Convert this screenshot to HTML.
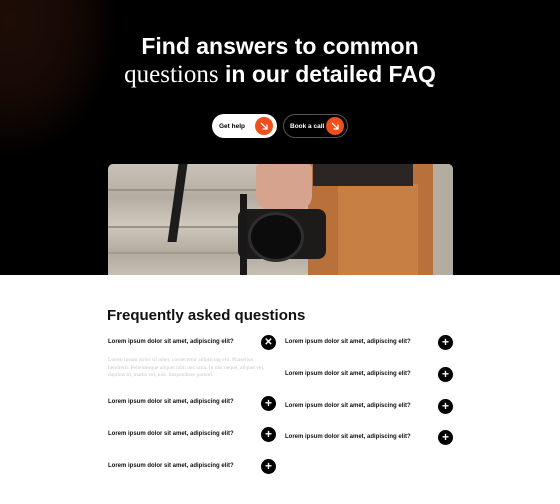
<!DOCTYPE html>
<html><head><style>
*{margin:0;padding:0;box-sizing:border-box}
body{width:560px;height:504px;background:#fff;font-family:"Liberation Sans",sans-serif;position:relative;overflow:hidden}
.hero{position:absolute;left:0;top:0;width:560px;height:275px;background:radial-gradient(ellipse 110px 140px at 10px 20px,#1e0d07 0%,#160904 55%,#000 100%),#000}
h1{position:absolute;top:32px;left:0;width:560px;text-align:center;color:#fff;font-size:23px;line-height:28px;font-weight:700}
h1 em{font-family:"Liberation Serif",serif;font-style:normal;font-weight:400;font-size:25px}
.btn{position:absolute;top:114px;height:24px;border-radius:12px;font-size:6.5px;font-weight:700;padding-left:7px}
.btn span.t{position:absolute;left:7px;top:9px;line-height:7px}
.btn .c{position:absolute;right:4px;top:3px;width:18px;height:18px;border-radius:50%;background:#f04e1a}
.photo{position:absolute;left:108px;top:164px;width:345px;height:111px;border-radius:5px 5px 0 0;overflow:hidden;background:linear-gradient(180deg,#c9c2b8 0%,#b5ada2 30%,#cfc8bd 55%,#b2aa9e 80%,#c6bfb4 100%)}
.photo div{position:absolute}
.faq{position:absolute;font-size:6px;font-weight:700;color:#111}
.ic{position:absolute;width:15px;height:15px;border-radius:50%;background:#000;color:#fff;font-size:12px;line-height:15px;text-align:center;font-weight:700}
</style></head><body>
<div class="hero">
<h1>Find answers to common<br><em>questions</em> in our detailed FAQ</h1>
<div class="btn" style="left:212px;width:65px;background:#fff;color:#000"><span class="t">Get help</span><span class="c"><svg width="18" height="18" viewBox="0 0 18 18"><path d="M6 6L12 12M12 7.5V12H7.5" stroke="#fff" stroke-width="1.3" fill="none"/></svg></span></div>
<div class="btn" style="left:283px;width:65px;border:1px solid #555;color:#fff"><span class="t" style="left:6px;top:8px">Book a call</span><span class="c" style="top:2px;right:3px"><svg width="18" height="18" viewBox="0 0 18 18"><path d="M6 6L12 12M12 7.5V12H7.5" stroke="#fff" stroke-width="1.3" fill="none"/></svg></span></div>
<div class="photo">
<div style="left:0;top:25px;width:345px;height:2px;background:#9c9488"></div>
<div style="left:0;top:62px;width:345px;height:2px;background:#9c9488"></div>
<div style="left:0;top:88px;width:345px;height:2px;background:#a39b8f"></div>
<div style="left:65px;top:0;width:9px;height:78px;background:#1c1c1c;transform:skewX(-8deg)"></div>
<div style="left:200px;top:0;width:128px;height:111px;background:#b8713a"></div>
<div style="left:230px;top:20px;width:80px;height:91px;background:#c77f44"></div>
<div style="left:205px;top:0;width:100px;height:22px;background:#2b2624"></div>
<div style="left:325px;top:0;width:20px;height:111px;background:#b3aca1"></div>
<div style="left:148px;top:0;width:56px;height:46px;background:#d6a48e;border-radius:4px 4px 14px 14px"></div>
<div style="left:130px;top:45px;width:88px;height:50px;background:#1d1a1a;border-radius:8px"></div>
<div style="left:140px;top:48px;width:56px;height:50px;background:#0c0c0c;border:3px solid #2e2e2e;border-radius:50%"></div>
<div style="left:132px;top:30px;width:7px;height:81px;background:#181818"></div>
</div>
</div>
<div style="position:absolute;left:107px;top:307px;font-size:15px;font-weight:700;color:#111">Frequently asked questions</div>
<div class="faq" style="left:108px;top:339px">Lorem ipsum dolor sit amet, adipiscing elit?</div>
<div class="ic" style="left:261px;top:335px;font-size:10px">✕</div>
<div style="position:absolute;left:108px;top:357px;width:160px;font-family:'Liberation Serif',serif;font-size:5.5px;line-height:7.5px;color:#c8c8c8">Lorem ipsum dolor sit amet, consectetur adipiscing elit. Phasellus hendrerit. Pellentesque aliquet nibh nec urna. In nisi neque, aliquet vel, dapibus id, mattis vel, nisi. Suspendisse potenti.</div>
<div class="faq" style="left:108px;top:399px">Lorem ipsum dolor sit amet, adipiscing elit?</div><div class="ic" style="left:261px;top:396px">+</div>
<div class="faq" style="left:108px;top:431px">Lorem ipsum dolor sit amet, adipiscing elit?</div><div class="ic" style="left:261px;top:427px">+</div>
<div class="faq" style="left:108px;top:463px">Lorem ipsum dolor sit amet, adipiscing elit?</div><div class="ic" style="left:261px;top:459px">+</div>
<div class="faq" style="left:285px;top:339px">Lorem ipsum dolor sit amet, adipiscing elit?</div><div class="ic" style="left:438px;top:335px">+</div>
<div class="faq" style="left:285px;top:371px">Lorem ipsum dolor sit amet, adipiscing elit?</div><div class="ic" style="left:438px;top:367px">+</div>
<div class="faq" style="left:285px;top:403px">Lorem ipsum dolor sit amet, adipiscing elit?</div><div class="ic" style="left:438px;top:399px">+</div>
<div class="faq" style="left:285px;top:434px">Lorem ipsum dolor sit amet, adipiscing elit?</div><div class="ic" style="left:438px;top:430px">+</div>
</body></html>
